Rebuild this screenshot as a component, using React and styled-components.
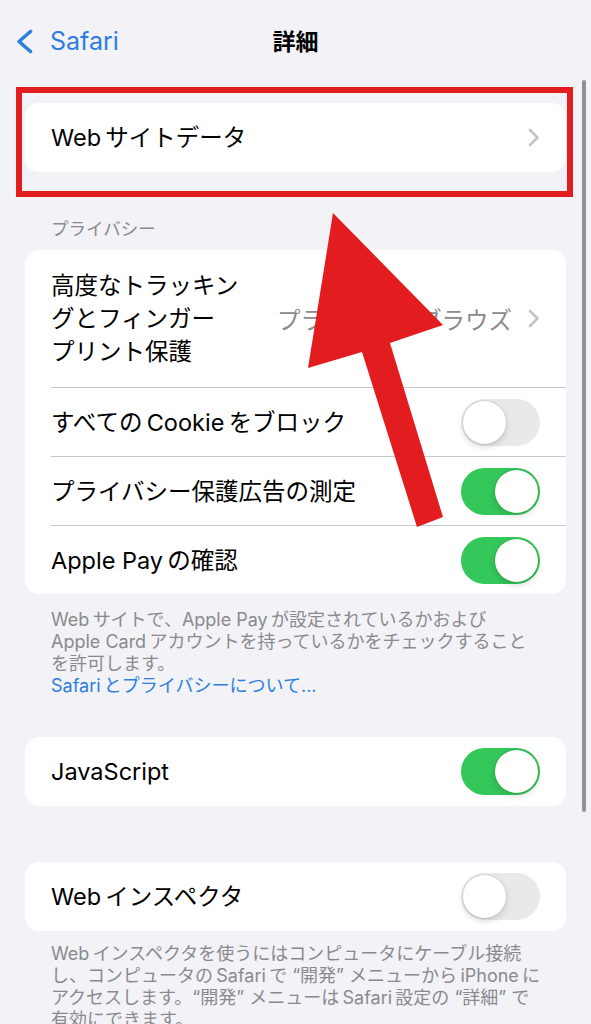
import React from "react";
import styled, { createGlobalStyle } from "styled-components";

const GlobalStyle = createGlobalStyle`
  html, body { margin: 0; padding: 0; background: #f2f2f7; }
  body {
    font-family: "Inter", "Noto Sans CJK JP", sans-serif;
    -webkit-font-smoothing: antialiased;
  }
  * { box-sizing: border-box; }
`;

const BLUE = "#2b7fe0";
const GRAY = "#8a8a8e";

const Page = styled.div`
  position: relative;
  width: 591px;
  height: 1024px;
  overflow: hidden;
  background: #f2f2f7;
  color: #000;
`;

const NavBar = styled.header`
  display: grid;
  grid-template-columns: 1fr auto 1fr;
  align-items: center;
  height: 83px;
  padding: 0 15px;
`;

const BackButton = styled.div`
  display: flex;
  align-items: center;
  gap: 16px;
  color: ${BLUE};
  font-size: 25px;
  line-height: 1;
`;

const Title = styled.h1`
  margin: 0;
  font-size: 23px;
  font-weight: 700;
  line-height: 1;
  padding-top: 2px;
`;

const Content = styled.main`
  padding: 20px 25px 0;
  display: flex;
  flex-direction: column;
`;

const Highlight = styled.div`
  position: relative;
`;

const Frame = styled.div`
  position: absolute;
  top: -16px;
  left: -9px;
  right: -7px;
  bottom: -25px;
  border: 6px solid #e11d1f;
  pointer-events: none;
`;

const Card = styled.section`
  background: #fff;
  border-radius: 14px;
  overflow: hidden;
  margin-top: ${(p) => p.$gap || 0}px;
`;

const Row = styled.div`
  display: flex;
  padding-left: 26px;
`;

const RowBody = styled.div`
  flex: 1;
  display: flex;
  align-items: center;
  gap: 14px;
  min-height: ${(p) => (p.$tall ? 137 : 69)}px;
  padding: ${(p) => (p.$tall ? "19px" : "0")} 26px ${(p) => (p.$tall ? "19px" : "0")} 0;
  border-top: 1px solid #c9c9cd;
  ${Row}:first-child > & {
    border-top: 0;
    min-height: ${(p) => (p.$tall ? 137 : 69)}px;
  }
`;

const Label = styled.div`
  flex: 1;
  font-size: 23.5px;
  line-height: 33px;
  white-space: nowrap;
`;

const Value = styled.span`
  color: ${GRAY};
  font-size: 23.5px;
  white-space: nowrap;
  margin-right: 2px;
`;

const Switch = styled.span`
  display: inline-flex;
  flex-shrink: 0;
  width: 79px;
  height: 47px;
  padding: 2px;
  border-radius: 24px;
  background: ${(p) => (p.$on ? "#34c759" : "#e9e9ea")};
  justify-content: ${(p) => (p.$on ? "flex-end" : "flex-start")};
`;

const Knob = styled.span`
  width: 43px;
  height: 43px;
  border-radius: 50%;
  background: #fff;
  box-shadow: 0 0 0 1px rgba(0, 0, 0, 0.06), 0 3px 7px rgba(0, 0, 0, 0.15);
`;

const SectionHeader = styled.div`
  padding: 47px 26px 11px;
  font-size: 17.5px;
  line-height: 20px;
  color: ${GRAY};
`;

const Footer = styled.div`
  padding: ${(p) => p.$top}px 26px 0;
  font-size: 18px;
  line-height: 22px;
  color: ${GRAY};
`;

const Line = styled.span`
  display: block;
  white-space: nowrap;
`;

const Link = styled(Line)`
  color: ${BLUE};
`;

const ScrollIndicator = styled.div`
  position: absolute;
  right: 5px;
  top: 80px;
  width: 4px;
  height: 732px;
  border-radius: 2px;
  background: #919196;
`;

const Overlay = styled.svg`
  position: absolute;
  top: 0;
  left: 0;
  pointer-events: none;
`;

const BackChevron = () => (
  <svg width="19" height="25" viewBox="0 0 19 25" fill="none">
    <path d="M15.5 2.5 L4 12.5 L15.5 22.5" stroke={BLUE} strokeWidth="3.6" strokeLinecap="round" strokeLinejoin="round" />
  </svg>
);

const Chevron = () => (
  <svg width="12" height="19" viewBox="0 0 12 19" fill="none" style={{ flexShrink: 0 }}>
    <path d="M2 2 L9.5 9.5 L2 17" stroke="#c4c4c7" strokeWidth="2.6" strokeLinecap="round" strokeLinejoin="round" />
  </svg>
);

const Toggle = ({ on }) => (
  <Switch $on={on}>
    <Knob />
  </Switch>
);

const T = "\u2009";

export default function App() {
  return (
    <>
      <GlobalStyle />
      <Page>
        <NavBar>
          <BackButton>
            <BackChevron />
            Safari
          </BackButton>
          <Title>詳細</Title>
          <span />
        </NavBar>

        <Content>
          <Highlight>
            <Card>
              <Row>
                <RowBody>
                  <Label>Web{T}サイトデータ</Label>
                  <Chevron />
                </RowBody>
              </Row>
            </Card>
            <Frame />
          </Highlight>

          <SectionHeader>プライバシー</SectionHeader>
          <Card>
            <Row>
              <RowBody $tall>
                <Label>
                  高度なトラッキン
                  <br />
                  グとフィンガー
                  <br />
                  プリント保護
                </Label>
                <Value>プライベートブラウズ</Value>
                <Chevron />
              </RowBody>
            </Row>
            <Row>
              <RowBody>
                <Label>すべての{T}Cookie{T}をブロック</Label>
                <Toggle on={false} />
              </RowBody>
            </Row>
            <Row>
              <RowBody>
                <Label>プライバシー保護広告の測定</Label>
                <Toggle on />
              </RowBody>
            </Row>
            <Row>
              <RowBody>
                <Label>Apple Pay{T}の確認</Label>
                <Toggle on />
              </RowBody>
            </Row>
          </Card>
          <Footer $top={15}>
            <Line>Web{T}サイトで、Apple Pay{T}が設定されているかおよび</Line>
            <Line>Apple Card{T}アカウントを持っているかをチェックすること</Line>
            <Line>を許可します。</Line>
            <Link>Safari{T}とプライバシーについて...</Link>
          </Footer>

          <Card $gap={40}>
            <Row>
              <RowBody>
                <Label>JavaScript</Label>
                <Toggle on />
              </RowBody>
            </Row>
          </Card>

          <Card $gap={56}>
            <Row>
              <RowBody>
                <Label>Web{T}インスペクタ</Label>
                <Toggle on={false} />
              </RowBody>
            </Row>
          </Card>
          <Footer $top={12}>
            <Line>Web{T}インスペクタを使うにはコンピュータにケーブル接続</Line>
            <Line>し、コンピュータの{T}Safari{T}で “開発” メニューから{T}iPhone{T}に</Line>
            <Line>アクセスします。“開発” メニューは{T}Safari{T}設定の “詳細” で</Line>
            <Line>有効にできます。</Line>
          </Footer>
        </Content>

        <ScrollIndicator />

        <Overlay width="591" height="1024" viewBox="0 0 591 1024">
          <polygon
            points="333,213 443,325 390,343 443,517 417,527 362,352 308,368"
            fill="#e31d1f"
          />
        </Overlay>
      </Page>
    </>
  );
}
